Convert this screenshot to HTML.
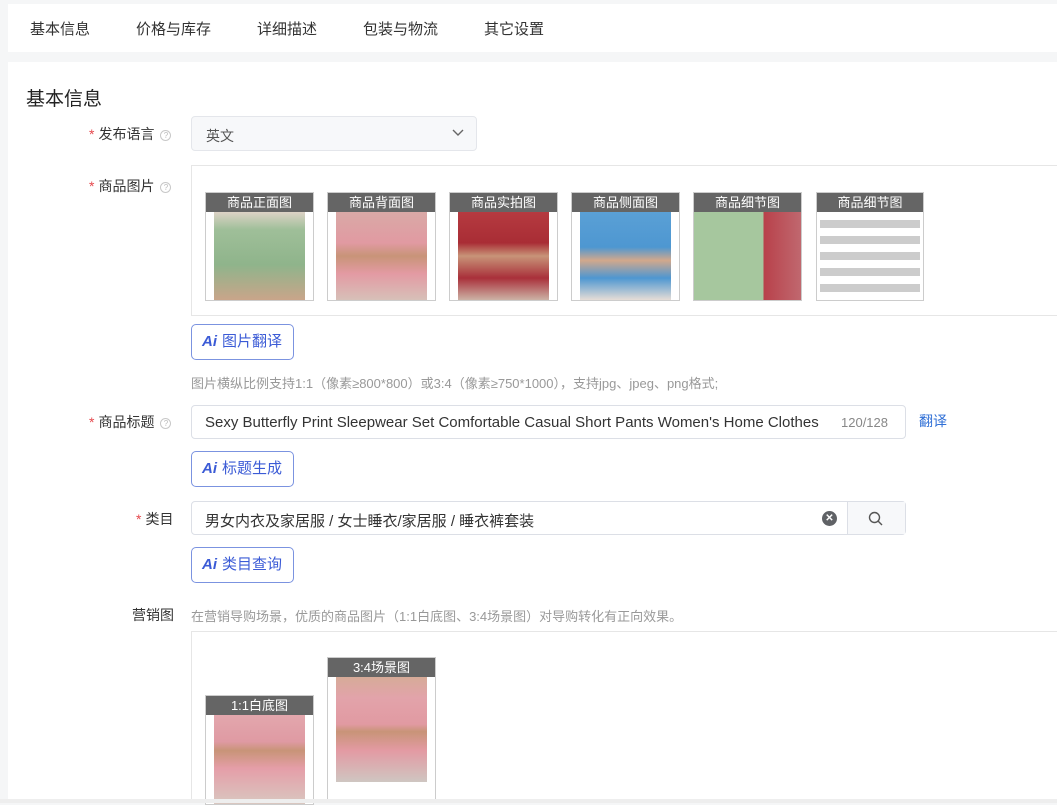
<!DOCTYPE html>
<html><head><meta charset="utf-8"><style>
*{margin:0;padding:0;box-sizing:border-box}
body{width:1057px;height:803px;overflow:hidden;background:#f5f6f7;font-family:"Liberation Sans","Noto Sans CJK SC",sans-serif;font-size:14px;color:#333;position:relative}
.a{position:absolute}
.tabs{left:8px;top:4px;width:1049px;height:48px;background:#fff}
.tabs span{position:absolute;top:14px;font-size:15px;color:#333}
.panel{left:8px;top:62px;width:1049px;height:737px;background:#fff}
.lbl{font-size:14px;color:#333}
.req{color:#e5484d;margin-right:4px}
.q{display:inline-block;width:11px;height:11px;border:1px solid #c8c8c8;border-radius:50%;font-size:8px;line-height:9px;text-align:center;color:#bbb;vertical-align:1px;margin-left:6px}
.box{border:1px solid #dcdfe6;border-radius:4px;background:#fff}
.aibtn{border:1px solid #7b93e0;border-radius:5px;color:#3b5bd6;font-size:15px;height:36px;line-height:34px;width:103px;padding-left:10px}
.aibtn b{font-style:italic;font-weight:bold;font-size:15px;margin-right:5px}
.card{border:1px solid #ccc;background:#fff;overflow:hidden}
.card .t{position:absolute;left:0;top:0;right:0;height:19px;background:rgba(80,80,80,.88);color:#fff;font-size:13px;line-height:19px;text-align:center;z-index:2}
.card .im{position:absolute;left:8px;right:8px;top:19px;bottom:0}
</style></head><body>
<div class="a tabs">
<span style="left:22px">基本信息</span><span style="left:128px">价格与库存</span><span style="left:249px">详细描述</span><span style="left:355px">包装与物流</span><span style="left:476px">其它设置</span>
</div>
<div class="a panel"></div>
<div class="a" style="left:26px;top:84px;font-size:19px;color:#222">基本信息</div>

<div class="a lbl" style="left:89px;top:124px"><span class="req">*</span>发布语言<span class="q">?</span></div>
<div class="a box" style="left:191px;top:116px;width:286px;height:35px;background:#f7f8fa;border-color:#e4e6eb"><span class="a" style="left:14px;top:9px;color:#555">英文</span><svg class="a" style="right:12px;top:12px" width="12" height="8" viewBox="0 0 12 8"><path d="M1 1l5 5 5-5" fill="none" stroke="#666" stroke-width="1.4"/></svg></div>

<div class="a lbl" style="left:89px;top:176px"><span class="req">*</span>商品图片<span class="q">?</span></div>
<div class="a" style="left:191px;top:165px;width:870px;height:151px;border:1px solid #e6e6e6"></div>
<div class="a card" style="left:205px;top:192px;width:109px;height:109px"><div class="t">商品正面图</div><div class="im" style="background:linear-gradient(180deg,#ddd3c6 0,#9fbf99 20%,#8fb48b 60%,#c9a58a 100%)"></div></div>
<div class="a card" style="left:327px;top:192px;width:109px;height:109px"><div class="t">商品背面图</div><div class="im" style="background:linear-gradient(180deg,#d9a9a6 0,#e19aa2 35%,#c89478 50%,#e39aa3 70%,#d7c0b8 100%)"></div></div>
<div class="a card" style="left:449px;top:192px;width:109px;height:109px"><div class="t">商品实拍图</div><div class="im" style="background:linear-gradient(180deg,#b53a40 0,#a92d35 35%,#c89478 50%,#a9303a 75%,#ccb2a5 100%)"></div></div>
<div class="a card" style="left:571px;top:192px;width:109px;height:109px"><div class="t">商品侧面图</div><div class="im" style="background:linear-gradient(180deg,#5aa0d6 0,#4e97d1 40%,#d2a88c 55%,#4e97d1 75%,#e6ddd6 100%)"></div></div>
<div class="a card" style="left:693px;top:192px;width:109px;height:109px"><div class="t">商品细节图</div><div class="im" style="left:0;right:0;background:linear-gradient(90deg,#a6c79e 0,#a6c79e 65%,#b8414a 65%,#c0686f 100%)"></div></div>
<div class="a card" style="left:816px;top:192px;width:108px;height:109px"><div class="t">商品细节图</div><div class="im" style="left:3px;right:3px;background:repeating-linear-gradient(180deg,#fff 0,#fff 8px,#ccc 8px,#ccc 16px)"></div></div>

<div class="a aibtn" style="left:191px;top:324px"><b>Ai</b>图片翻译</div>
<div class="a" style="left:191px;top:373px;font-size:13px;color:#999">图片横纵比例支持1:1（像素≥800*800）或3:4（像素≥750*1000），支持jpg、jpeg、png格式;</div>

<div class="a lbl" style="left:89px;top:412px"><span class="req">*</span>商品标题<span class="q">?</span></div>
<div class="a box" style="left:191px;top:405px;width:715px;height:34px;overflow:hidden"><span class="a" style="left:13px;top:8px;font-size:15px;color:#333;white-space:nowrap;width:618px;overflow:hidden">Sexy Butterfly Print Sleepwear Set Comfortable Casual Short Pants Women's Home Clothes Set</span><span class="a" style="right:17px;top:9px;font-size:13px;color:#888">120/128</span></div>
<div class="a" style="left:919px;top:411px;color:#2f6fd6">翻译</div>
<div class="a aibtn" style="left:191px;top:451px"><b>Ai</b>标题生成</div>

<div class="a lbl" style="left:136px;top:509px"><span class="req">*</span>类目</div>
<div class="a box" style="left:191px;top:501px;width:715px;height:34px"><span class="a" style="left:13px;top:8px;font-size:15px;color:#333">男女内衣及家居服 / 女士睡衣/家居服 / 睡衣裤套装</span><span class="a" style="left:630px;top:9px;width:15px;height:15px;border-radius:50%;background:#606266;color:#fff;font-size:10px;line-height:15px;text-align:center;font-weight:bold">✕</span><div class="a" style="left:655px;top:0;width:58px;height:32px;border-left:1px solid #dcdfe6;background:#f7f8fa"><svg class="a" style="left:20px;top:9px" width="15" height="15" viewBox="0 0 15 15"><circle cx="6.5" cy="6.5" r="5" fill="none" stroke="#555" stroke-width="1.4"/><path d="M10 10l4 4" stroke="#555" stroke-width="1.4"/></svg></div></div>
<div class="a aibtn" style="left:191px;top:547px"><b>Ai</b>类目查询</div>

<div class="a lbl" style="left:132px;top:605px">营销图</div>
<div class="a" style="left:191px;top:606px;font-size:13px;color:#999">在营销导购场景，优质的商品图片（1:1白底图、3:4场景图）对导购转化有正向效果。</div>
<div class="a" style="left:191px;top:631px;width:870px;height:172px;border:1px solid #e6e6e6;border-bottom:none"></div>
<div class="a card" style="left:205px;top:695px;width:109px;height:110px"><div class="t">1:1白底图</div><div class="im" style="background:linear-gradient(180deg,#e3a7ad 0,#df9aa3 30%,#c89478 40%,#e59ea8 60%,#d9c7c0 100%)"></div></div>
<div class="a card" style="left:327px;top:657px;width:109px;height:146px"><div class="t">3:4场景图</div><div class="im" style="bottom:20px;background:linear-gradient(180deg,#d6ab98 0,#e2a3aa 20%,#e19aa2 45%,#c89478 52%,#e39aa3 70%,#cfc6c1 100%)"></div></div>
<div class="a" style="left:0;top:799px;width:1057px;height:4px;background:#eee"></div>
</body></html>
